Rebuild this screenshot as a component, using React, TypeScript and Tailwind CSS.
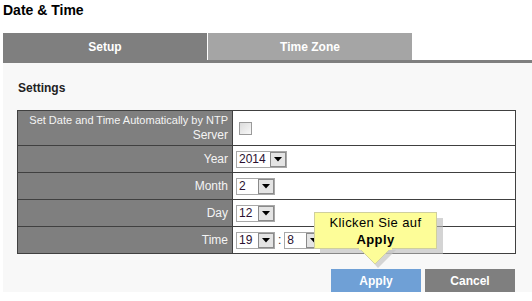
import React from 'react';

function Select({ value, width }: { value: string; width: number }) {
  return (
    <div
      className="flex h-[17px] items-center border border-[#a8a8a8] bg-white"
      style={{ width }}
    >
      <span className="flex-1 pl-[2px] text-[12px] leading-[15px] text-[#2a1030]">{value}</span>
      <span className="flex h-[15px] w-[16px] items-center justify-center border border-[#8a8a8a] bg-[#e4e4e4]">
        <svg width="8" height="5" viewBox="0 0 8 5">
          <path d="M0 0 H8 L4 4.5 Z" fill="#000" />
        </svg>
      </span>
    </div>
  );
}

const rows = [
  { label: 'Year', value: '2014', w: 51 },
  { label: 'Month', value: '2', w: 39 },
  { label: 'Day', value: '12', w: 39 },
];

export default function App() {
  return (
    <div
      className="h-[301px] w-[532px] overflow-hidden bg-white"
      style={{ fontFamily: '"Liberation Sans", Arial, sans-serif' }}
    >
      <div className="h-[33px] pl-[3px] pt-[2px] text-[14px] font-bold leading-[17px] text-black">
        Date &amp; Time
      </div>

      <div className="ml-[3px] flex border-b-[3px] border-[#7f7f7f]">
        <div className="flex h-[27px] w-[204px] items-center justify-center bg-[#7f7f7f] text-[12px] font-bold text-white">
          Setup
        </div>
        <div className="flex h-[27px] w-[205px] items-center justify-center border-l border-white bg-[#a5a5a5] text-[12px] font-bold text-white">
          Time Zone
        </div>
      </div>

      <div className="relative ml-[3px] h-[229px] bg-[#f8f8f8] pl-[14px] pr-[16px]">
        <div className="pl-[1px] pt-[18px] pb-[14px] text-[12px] font-bold leading-[15px] text-[#222]">
          Settings
        </div>

        <table className="w-full table-fixed border-collapse border border-[#404040] text-[12px]">
          <tbody>
            <tr className="h-[35px]">
              <td className="w-[215px] whitespace-nowrap border border-[#404040] bg-[#7f7f7f] pr-[4px] text-right text-[11px] leading-[15px] text-[#f4f4f4]">
                Set Date and Time Automatically by NTP
                <br />
                <span className="text-[12px]">Server</span>
              </td>
              <td className="border border-[#404040] bg-white pl-[6px]">
                <span className="block h-[13px] w-[13px] border border-[#9a9a9a] bg-gradient-to-br from-[#dcdcdc] to-[#f8f8f8]" />
              </td>
            </tr>
            {rows.map((r) => (
              <tr key={r.label} className="h-[27px]">
                <td className="border border-[#404040] bg-[#7f7f7f] pr-[4px] text-right text-[#f4f4f4]">
                  {r.label}
                </td>
                <td className="border border-[#404040] bg-white pl-[3px]">
                  <Select value={r.value} width={r.w} />
                </td>
              </tr>
            ))}
            <tr className="h-[27px]">
              <td className="border border-[#404040] bg-[#7f7f7f] pr-[4px] text-right text-[#f4f4f4]">
                Time
              </td>
              <td className="border border-[#404040] bg-white pl-[3px]">
                <div className="flex items-center gap-[3px]">
                  <Select value="19" width={39} />
                  <span className="text-[#333]">:</span>
                  <Select value="8" width={39} />
                </div>
              </td>
            </tr>
          </tbody>
        </table>

        <div className="mt-[15px] flex justify-end gap-[4px] pr-[1px]">
          <button className="h-[23px] w-[90px] bg-[#6fa0d6] text-[12px] font-bold text-white">
            Apply
          </button>
          <button className="h-[23px] w-[90px] bg-[#7f7f7f] text-[12px] font-bold text-white">
            Cancel
          </button>
        </div>

        <div className="absolute left-[311px] top-[149px]">
          <div className="absolute left-[6px] top-[6px] h-[36px] w-[123px] bg-[#b8b8b8] opacity-60" />
          <svg className="absolute left-[38px] top-[34px]" width="50" height="24" viewBox="0 0 50 24">
            <path d="M10 4 H44 L26 22 Z" fill="#c4c4c4" opacity="0.7" />
            <path d="M6 1 H40 L23 18 Z" fill="#fdfd98" stroke="#d4d4a0" strokeWidth="1" />
          </svg>
          <div className="relative flex h-[37px] w-[123px] flex-col items-center justify-center border border-[#cfcf9e] bg-[#fdfd98] text-[13px] leading-[17px] tracking-[0.4px] text-black">
            <span>Klicken Sie auf</span>
            <span className="font-bold">Apply</span>
          </div>
          <div className="absolute left-[45px] top-[35px] h-[3px] w-[33px] bg-[#fdfd98]" />
        </div>
      </div>
    </div>
  );
}
